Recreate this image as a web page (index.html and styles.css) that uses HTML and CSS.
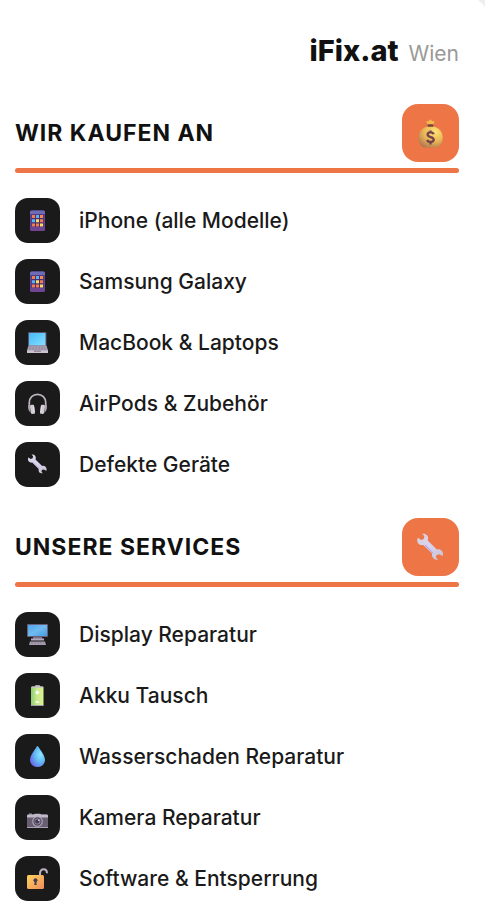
FILE: index.html
```html
<!DOCTYPE html>
<html lang="de">
<head>
  <meta charset="UTF-8">
  <meta name="viewport" content="width=device-width, initial-scale=1.0">
  <title>iFix.at Wien</title>
  <link rel="stylesheet" href="styles.css">
</head>
<body>
  <!-- Wiederverwendete Icons -->
  <svg class="sprite" aria-hidden="true">
    <defs>
      <linearGradient id="wrenchFill" x1="0" y1="0" x2="1" y2="1">
        <stop offset="0" stop-color="#d9d2dc"/>
        <stop offset=".5" stop-color="#d9d3f3"/>
        <stop offset="1" stop-color="#c9bfcb"/>
      </linearGradient>
      <linearGradient id="phoneFill" x1="0" y1="0" x2="0" y2="1">
        <stop offset="0" stop-color="#50479a"/>
        <stop offset="1" stop-color="#724492"/>
      </linearGradient>
    </defs>
    <symbol id="wrench" viewBox="0 0 21 21">
      <path fill="url(#wrenchFill)" d="M4.500.6c2.600-.6 4.500 1.300 4.300 3.500l-.3 1.300 6.600 6.500c2.600-.7 4.800 1.200 4.500 4.100l-.3.700-2.700-1.300-1.800.7-.3 1.900 1.500 1.200c-2.700.7-5-1.400-4.300-4.300L5.200 8.600C2.800 9.200.7 7.400.9 4.800l.4-1.300L3.800 5l1.800-.7.500-2z"/>
      <path fill="none" stroke="#b9a9e0" stroke-width=".8" d="M6.500 8.700l5.900 5.800"/>
    </symbol>
    <symbol id="phone" viewBox="0 0 21 21">
      <rect x="3" y=".5" width="15" height="20.500" rx="1.500" fill="url(#phoneFill)"/>
      <path fill="#6d6bb5" d="M4.500.5h12A1.500 1.500 0 0 1 18 2v2H3V2A1.500 1.500 0 0 1 4.500.5z"/>
      <rect x="4.500" y="4.500" width="12" height="12.500" fill="#49306f"/>
      <path fill="#f47d4d" d="M5 5h3v3H5zM13 9.300h3v3h-3zM5 13.500h3v3H5zM9 13.500h3v3H9z"/>
      <path fill="#56b4f4" d="M9 5h3v3H9zM5 9.300h3v3H5z"/>
      <path fill="#ffdc63" d="M9 9.300h3v3H9zM13 13.500h3v3h-3z"/>
      <path fill="#f88a4d" d="M13 5h3v3h-3z"/>
    </symbol>
  </svg>

  <main class="card">
    <header class="brand">
      <h1 class="brand-name">iFix.at</h1>
      <span class="brand-city">Wien</span>
    </header>

    <section class="section">
      <div class="section-head">
        <h2>WIR KAUFEN AN</h2>
        <span class="section-icon">
          <svg viewBox="0 0 29 29" aria-hidden="true">
            <defs>
              <radialGradient id="bagFill" cx=".68" cy=".25" r=".85">
                <stop offset="0" stop-color="#ffe374"/>
                <stop offset=".55" stop-color="#e8b556"/>
                <stop offset="1" stop-color="#b17750"/>
              </radialGradient>
            </defs>
            <path fill="#f3b94e" d="M11.500 5.500L10.300 2l2.300.3L14.500.2l1.800 2.100 2.400-.3-1.200 3.500z"/>
            <path fill="url(#bagFill)" d="M11.800 7.500h5.600c5.600 1 9.300 5.600 9.300 11.200 0 4-1.700 7.200-4.200 9.100-.7.500-1.400.7-2.400.7H9c-1 0-1.700-.2-2.400-.7-2.500-1.900-4.200-5.100-4.200-9.100C2.400 13 6.200 8.500 11.800 7.500z"/>
            <rect x="11.500" y="5.300" width="6" height="2.400" rx="1" fill="#74483b"/>
            <path fill="none" stroke="#74424a" stroke-width="2.300" d="M17.600 15.300c-.4-1.500-1.600-2-3.100-2-1.700 0-2.900.8-2.900 2.300 0 3.400 6.100 1.500 6.100 5 0 1.600-1.200 2.400-3.100 2.400-1.900 0-3-.8-3.300-2.300M14.500 11.500v2M14.500 22.800v2.700"/>
          </svg>
        </span>
      </div>
      <ul class="items">
        <li class="item">
          <span class="item-icon"><svg aria-hidden="true"><use href="#phone"/></svg></span>
          <span>iPhone (alle Modelle)</span>
        </li>
        <li class="item">
          <span class="item-icon"><svg aria-hidden="true"><use href="#phone"/></svg></span>
          <span>Samsung Galaxy</span>
        </li>
        <li class="item">
          <span class="item-icon">
            <svg viewBox="0 0 21 21" aria-hidden="true">
              <defs>
                <linearGradient id="laptopFill" x1="0" y1="0" x2="1" y2="1">
                  <stop offset="0" stop-color="#43baf6"/>
                  <stop offset="1" stop-color="#88dfff"/>
                </linearGradient>
              </defs>
              <rect x="1" y="0" width="18.500" height="14" rx="1" fill="#5c506c"/>
              <rect x="2" y="1" width="16.500" height="12.500" fill="url(#laptopFill)"/>
              <path fill="#aaa0b3" d="M1.500 13.500h18l1.500 5v2.500H0v-2.500z"/>
              <path fill="#cbc2d2" d="M0 18.500h21V21H0z"/>
              <path fill="none" stroke="#8d8298" stroke-dasharray="2 1" d="M2.500 15h15.500M2 17h17"/>
              <path fill="#8c8098" d="M7 18.500h7v1.300H7z"/>
            </svg>
          </span>
          <span>MacBook &amp; Laptops</span>
        </li>
        <li class="item">
          <span class="item-icon">
            <svg viewBox="0 0 21 21" aria-hidden="true">
              <path fill="none" stroke="#bdb5bf" stroke-width="1.700" d="M2.300 14V9.500C2.300 4.600 5.900 1.300 10.500 1.300s8.200 3.300 8.200 8.200V14"/>
              <path fill="#aaa2ad" d="M1 13.500c0-1.300 1-2 2-2V19c-1-.7-2-2.500-2-5.500zM20 13.500c0-1.300-1-2-2-2V19c1-.7 2-2.500 2-5.500z"/>
              <path fill="#d2cbd4" d="M3 13.500c0-1 .5-1.500 1.500-1.700l1.200-.1c1 0 1.400.4 1.500 1.300l.8 6.200c.1 1-.3 1.500-1.200 1.600l-1.500.1c-.9 0-1.500-.4-1.700-1.300zM18 13.500c0-1-.5-1.500-1.500-1.700l-1.200-.1c-1 0-1.400.4-1.500 1.300l-.8 6.200c-.1 1 .3 1.500 1.200 1.600l1.500.1c.9 0 1.500-.4 1.700-1.300z"/>
              <path stroke="#efe9f0" stroke-width=".8" d="M6.500 13.500l.7 5.500M14.500 13.500l-.7 5.500"/>
            </svg>
          </span>
          <span>AirPods &amp; Zubehör</span>
        </li>
        <li class="item">
          <span class="item-icon"><svg aria-hidden="true"><use href="#wrench"/></svg></span>
          <span>Defekte Geräte</span>
        </li>
      </ul>
    </section>

    <section class="section">
      <div class="section-head">
        <h2>UNSERE SERVICES</h2>
        <span class="section-icon"><svg aria-hidden="true"><use href="#wrench"/></svg></span>
      </div>
      <ul class="items">
        <li class="item">
          <span class="item-icon">
            <svg viewBox="0 0 21 21" aria-hidden="true">
              <defs>
                <linearGradient id="screenFill" x1="0" y1="0" x2="1" y2="1">
                  <stop offset="0" stop-color="#4aa6ec"/>
                  <stop offset=".5" stop-color="#70baf0"/>
                  <stop offset="1" stop-color="#3f9be3"/>
                </linearGradient>
              </defs>
              <rect width="21" height="13" rx="1" fill="#695d77"/>
              <rect x="1" y="1" width="19" height="11" fill="url(#screenFill)"/>
              <path fill="#7b718b" d="M6 13h9v2H6z"/>
              <path fill="#b3a8bb" d="M4 14.500h13v2H4z"/>
              <path fill="#a79cad" d="M3 17.500h15l1 3.500H2z"/>
              <path stroke="#8b8095" stroke-dasharray="2 1" d="M4 19h13"/>
            </svg>
          </span>
          <span>Display Reparatur</span>
        </li>
        <li class="item">
          <span class="item-icon">
            <svg viewBox="0 0 21 21" aria-hidden="true">
              <defs>
                <linearGradient id="batteryFill">
                  <stop offset="0" stop-color="#8fcf73"/>
                  <stop offset=".45" stop-color="#c5e88b"/>
                  <stop offset="1" stop-color="#e0f391"/>
                </linearGradient>
              </defs>
              <rect x="8" y="0" width="5" height="2.500" rx=".7" fill="#aaa1b2"/>
              <rect x="4" y="1.500" width="12.500" height="19.500" rx="1" fill="url(#batteryFill)"/>
              <path fill="#c7bfcc" d="M5 1.500h10.500l1 1.300H4z"/>
              <path fill="#a69aac" d="M4 20h12.500v1H4z"/>
              <path stroke="#fff" stroke-width="1.600" d="M8.300 7.500h4M10.300 5.500v4M8.500 17h3.500"/>
            </svg>
          </span>
          <span>Akku Tausch</span>
        </li>
        <li class="item">
          <span class="item-icon">
            <svg viewBox="0 0 21 21" aria-hidden="true">
              <defs>
                <radialGradient id="dropFill" cx=".7" cy=".4" r=".7">
                  <stop offset="0" stop-color="#90e5ff"/>
                  <stop offset=".5" stop-color="#62bdf5"/>
                  <stop offset="1" stop-color="#676ee7"/>
                </radialGradient>
              </defs>
              <path fill="url(#dropFill)" d="M9.600.7c.5-.8 1.300-.8 1.800 0C13.500 4.300 18 9.500 18 13.800c0 4.200-3.300 7.200-7.500 7.200S3 18 3 13.800C3 9.500 7.500 4.300 9.600.7z"/>
            </svg>
          </span>
          <span>Wasserschaden Reparatur</span>
        </li>
        <li class="item">
          <span class="item-icon">
            <svg viewBox="0 0 21 21" aria-hidden="true">
              <rect x="2" y="6.500" width="3" height="2" fill="#9d95a7"/>
              <rect y="7.500" width="21" height="13.500" rx="1" fill="#675e70"/>
              <path fill="#c0b7c9" d="M1 7.500h5.500L8 6.700h5l1.500.8H20l1 1v2H0v-2z"/>
              <path fill="#aca0b9" d="M0 20h21v1H0z"/>
              <circle cx="10.500" cy="14.500" r="5.300" fill="#b4abba"/>
              <circle cx="10.500" cy="14.500" r="4.200" fill="#514862"/>
              <circle cx="10.500" cy="14.500" r="3" fill="#8d83a1"/>
              <circle cx="10.200" cy="14.500" r="2" fill="#45394f"/>
              <circle cx="11.800" cy="13.300" r=".8" fill="#ddd5e4"/>
            </svg>
          </span>
          <span>Kamera Reparatur</span>
        </li>
        <li class="item">
          <span class="item-icon">
            <svg viewBox="0 0 21 21" aria-hidden="true">
              <defs>
                <linearGradient id="lockFill" x1="0" y1="0" x2="1" y2="1">
                  <stop offset="0" stop-color="#ffd35d"/>
                  <stop offset="1" stop-color="#ee8c5b"/>
                </linearGradient>
              </defs>
              <path fill="none" stroke="#bcb1c4" stroke-width="2" d="M13 7.500V5.200C13 2.800 14.500 1.200 16.600 1.200S20 2.800 20 5.200"/>
              <rect y="7" width="17" height="14" rx="1.500" fill="url(#lockFill)"/>
              <circle cx="8.500" cy="12.300" r="2" fill="#4b3a56"/>
              <path fill="#4b3a56" d="M7.700 13h1.600l.4 4H7.300z"/>
            </svg>
          </span>
          <span>Software &amp; Entsperrung</span>
        </li>
      </ul>
    </section>
  </main>
</body>
</html>
```

FILE: styles.css
```css
* {
  box-sizing: border-box;
  margin: 0;
  padding: 0;
}
body {
  display: flow-root;
  font-family: Inter, "Liberation Sans", sans-serif;
  background: #eee;
  color: #1a1a1a;
  overflow-x: hidden;
}
.sprite {
  position: absolute;
  width: 0;
  height: 0;
}
.card {
  background: #fff;
  border-radius: 0 32px 0 0;
  margin: -6px -6px 0 0;
  padding: 37px 32px 32px 15px;
}
.brand {
  display: flex;
  justify-content: flex-end;
  align-items: baseline;
  gap: 10px;
  line-height: 40px;
  margin-bottom: 30px;
}
.brand-name {
  font-size: 29px;
  font-weight: 800;
  color: #111;
}
.brand-city {
  font-size: 21px;
  color: #999;
}
.section + .section {
  margin-top: 31px;
}
.section-head {
  display: flex;
  flex-wrap: wrap;
  justify-content: space-between;
  align-items: center;
  row-gap: 6px;
  margin-bottom: 25px;
}
.section-head::after {
  content: "";
  width: 100%;
  height: 5px;
  border-radius: 3px;
  background: #ee7545;
}
.section-head h2 {
  font-size: 23px;
  font-weight: 700;
  letter-spacing: 1px;
  color: #111;
}
.section-icon {
  display: flex;
  align-items: center;
  justify-content: center;
  width: 57px;
  height: 58px;
  border-radius: 16px;
  background: #ee7545;
}
.section-icon svg {
  width: 29px;
  height: 29px;
}
.items {
  display: grid;
  gap: 16px;
  list-style: none;
}
.item {
  display: flex;
  align-items: center;
  gap: 19px;
  font-size: 21px;
  font-weight: 500;
}
.item-icon {
  display: flex;
  align-items: center;
  justify-content: center;
  flex: none;
  width: 45px;
  height: 45px;
  border-radius: 13px;
  background: #1a1a1a;
}
.item-icon svg {
  width: 21px;
  height: 21px;
}
```
